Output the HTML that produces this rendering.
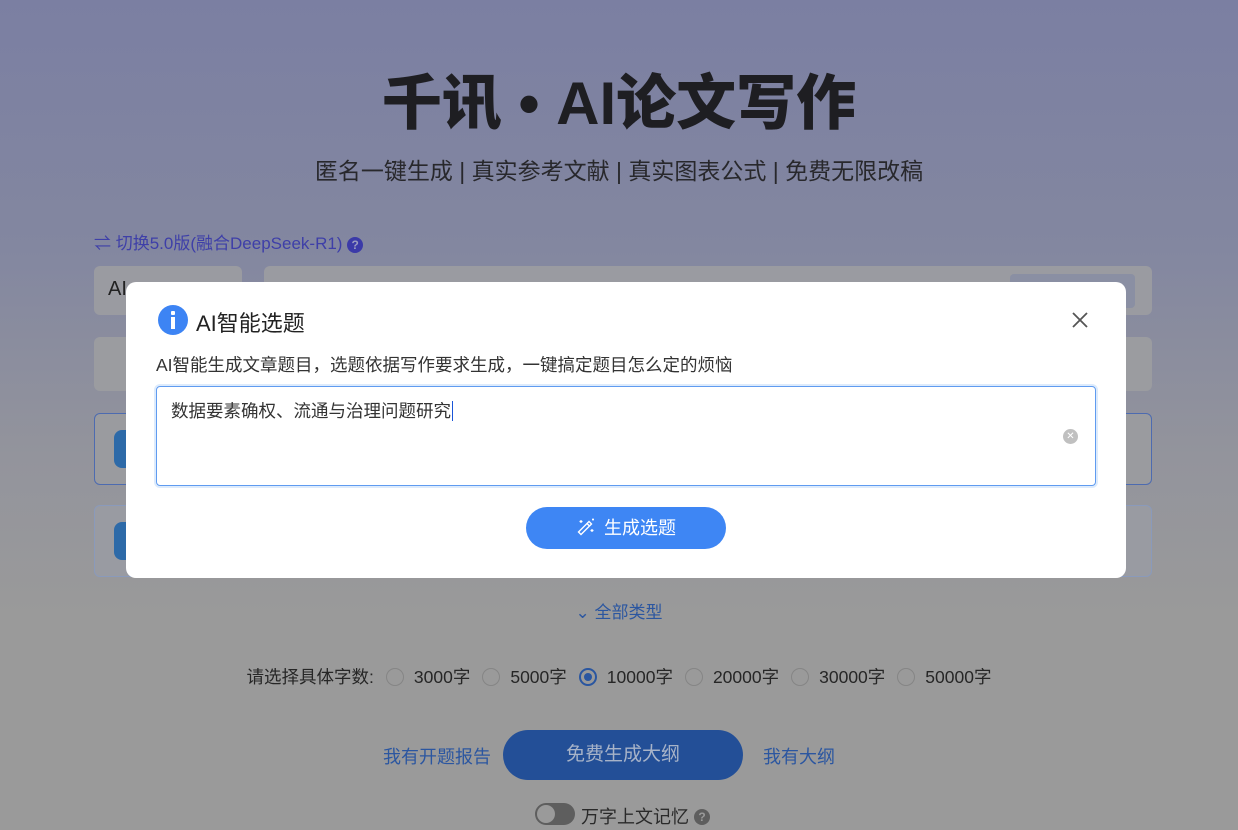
<!DOCTYPE html>
<html><head><meta charset="utf-8"><style>
*{box-sizing:border-box;margin:0;padding:0}
body{width:1238px;height:830px;overflow:hidden;position:relative;font-family:"Liberation Sans","Noto Sans CJK SC",sans-serif;background:linear-gradient(180deg,#7b7fa2 0%,#8387a0 30%,#93949c 55%,#9a9a9a 75%,#9a9a9a 100%)}
.a{position:absolute}
.title{left:0;width:1238px;top:55px;text-align:center;font-size:60px;font-weight:900;color:#1e1e22;letter-spacing:0px}
.sub{left:0;width:1238px;top:152px;text-align:center;font-size:23px;color:#28282c}
.card{background:#9d9ea2;border-radius:6px}
.modal{left:126px;top:282px;width:1000px;height:296px;background:#fff;border-radius:10px}
.r{display:inline-block;width:18px;height:18px;border:1px solid #858585;border-radius:50%;vertical-align:-3px;margin:0 10px 0 12px}
</style></head><body>
<div class="a title">千讯 • AI论文写作</div>
<div class="a sub">匿名一键生成 | 真实参考文献 | 真实图表公式 | 免费无限改稿</div>
<div class="a" style="left:94px;top:229px;font-size:17px;color:#3e3fa8">⇌ 切换5.0版(融合DeepSeek-R1) <span style="display:inline-block;width:16px;height:16px;border-radius:50%;background:#3b3aa8;color:#9a9cc0;font-size:12px;text-align:center;line-height:16px;font-weight:bold">?</span></div>
<div class="a card" style="left:94px;top:266px;width:148px;height:49px;background:#9a9ba1;font-size:20px;color:#222;padding:12px 14px">AI</div>
<div class="a card" style="left:264px;top:266px;width:888px;height:49px;background:#9a9ba1"></div>
<div class="a" style="left:1010px;top:274px;width:125px;height:34px;background:#8a8fa3;border-radius:4px"></div>
<div class="a card" style="left:94px;top:337px;width:1058px;height:54px;background:#9b9ca0"></div>
<div class="a card" style="left:94px;top:413px;width:1058px;height:72px;border:1px solid #4d6bb0;background:#9a9b9f"></div>
<div class="a" style="left:114px;top:430px;width:14px;height:38px;background:#2d6aa8;border-radius:8px 0 0 8px"></div>
<div class="a card" style="left:94px;top:505px;width:1058px;height:72px;border:1px solid #8a9abb;background:#999ba2"></div>
<div class="a" style="left:114px;top:522px;width:14px;height:38px;background:#2d6aa8;border-radius:8px 0 0 8px"></div>
<div class="a" style="left:0;width:1238px;top:598px;text-align:center;font-size:17px;color:#2b56a0">⌄ 全部类型</div>
<div class="a" style="left:0;width:1238px;top:664px;text-align:center;font-size:17.5px;color:#262626;white-space:nowrap">请选择具体字数:<span class="r"></span>3000字<span class="r"></span>5000字<span class="r" style="border:2px solid #2a56a0;position:relative"><span style="position:absolute;left:3px;top:3px;width:8px;height:8px;border-radius:50%;background:#2a56a0"></span></span>10000字<span class="r"></span>20000字<span class="r"></span>30000字<span class="r"></span>50000字</div>
<div class="a" style="left:383px;top:743px;font-size:18px;color:#2b56a0">我有开题报告</div>
<div class="a" style="left:503px;top:730px;width:240px;height:50px;border-radius:25px;background:#234f97;color:#a7b3c8;font-size:19px;text-align:center;line-height:50px">免费生成大纲</div>
<div class="a" style="left:763px;top:743px;font-size:18px;color:#2b56a0">我有大纲</div>
<div class="a" style="left:535px;top:803px;width:40px;height:22px;border-radius:11px;background:#5e5e5e"><div style="position:absolute;left:2px;top:2px;width:18px;height:18px;border-radius:50%;background:#9a9a9a"></div></div>
<div class="a" style="left:581px;top:803px;font-size:18px;color:#2a2a2a">万字上文记忆 <span style="display:inline-block;width:16px;height:16px;border-radius:50%;background:#5e5e5e;color:#9a9a9a;font-size:12px;text-align:center;line-height:16px;font-weight:bold;vertical-align:2px">?</span></div>

<div class="a modal">
  <div class="a" style="left:32px;top:23px;width:30px;height:30px;border-radius:50%;background:#3d84f4"><div style="position:absolute;left:13px;top:6px;width:4px;height:4px;background:#fff;border-radius:1px"></div><div style="position:absolute;left:13px;top:12px;width:4px;height:12px;background:#fff"></div></div>
  <div class="a" style="left:70px;top:24px;font-size:22px;color:#222">AI智能选题</div>
  <svg class="a" style="left:945px;top:29px" width="18" height="18"><path d="M2 2L16 16M16 2L2 16" stroke="#555" stroke-width="1.8"/></svg>
  <div class="a" style="left:30px;top:70px;font-size:17.5px;color:#333;white-space:nowrap">AI智能生成文章题目，选题依据写作要求生成，一键搞定题目怎么定的烦恼</div>
  <div class="a" style="left:30px;top:104px;width:940px;height:100px;border:1px solid #5f9bf0;border-radius:4px;box-shadow:0 0 0 2px #ddebfc">
    <div class="a" style="left:14px;top:11px;font-size:17.5px;color:#333;white-space:nowrap">数据要素确权、流通与治理问题研究<span style="border-left:1px solid #1a55d8;margin-left:1px"></span></div>
    <div class="a" style="left:906px;top:42px;width:15px;height:15px;border-radius:50%;background:#c0c0c0;color:#fff;font-size:10px;text-align:center;line-height:15px">✕</div>
  </div>
  <div class="a" style="left:400px;top:225px;width:200px;height:42px;border-radius:21px;background:#3e86f4;color:#fff;font-size:18px;text-align:center;line-height:42px">
    <svg width="20" height="20" viewBox="0 0 20 20" style="vertical-align:-3px;margin-right:8px"><path d="M5 17.5l-2.5-2.5L13 4.5l2.5 2.5z" stroke="#fff" stroke-width="1.4" fill="none"/><path d="M11 6.5l2.5 2.5" stroke="#fff" stroke-width="1.4"/><path d="M5 3v3M3.5 4.5h3M16 12v3M14.5 13.5h3M17 1.5v2M16 2.5h2" stroke="#fff" stroke-width="1.2"/></svg>生成选题</div>
</div>
</body></html>
